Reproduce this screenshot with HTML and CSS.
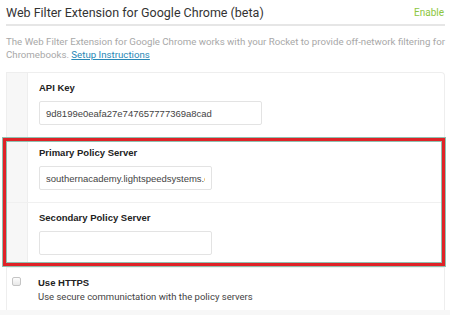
FILE: index.html
```html
<!DOCTYPE html>
<html lang="en">

<head>
    <meta charset="UTF-8">
    <title>Web Filter Extension for Google Chrome</title>
    <link rel="stylesheet" href="styles.css">
</head>

<body>
    <div class="section-head">
        <h2>Web Filter Extension for Google Chrome (beta)</h2>
        <a class="enable" href="#">Enable</a>
    </div>

    <p class="desc">The Web Filter Extension for Google Chrome works with your Rocket to provide off-network filtering for
        Chromebooks. <a href="#">Setup Instructions</a></p>

    <div class="card">
        <div class="row">
            <div class="gutter"></div>
            <div class="field">
                <label>API Key</label>
                <input class="input wide" type="text" value="9d8199e0eafa27e747657777369a8cad">
            </div>
        </div>
        <div class="row">
            <div class="gutter"></div>
            <div class="field">
                <label>Primary Policy Server</label>
                <input class="input" type="text" value="southernacademy.lightspeedsystems.com">
            </div>
        </div>
        <div class="row">
            <div class="gutter"></div>
            <div class="field">
                <label>Secondary Policy Server</label>
                <input class="input" type="text" value="">
            </div>
        </div>
        <div class="row check-row">
            <div class="gutter"><span class="checkbox"></span></div>
            <div class="field">
                <label>Use HTTPS</label>
                <div class="hint">Use secure communictation with the policy servers</div>
            </div>
        </div>

        <!-- highlight box drawn over the policy server rows -->
        <div class="highlight"></div>
    </div>
    <div class="footer-band"></div>
</body>

</html>
```

FILE: styles.css
```css
body {
    margin: 0;
    padding: 0 6px 0 6px;
    width: 439px;
    font-family: Roboto, 'Liberation Sans', sans-serif;
    background: #fff;
    color: #333;
}

.section-head {
    display: flex;
    justify-content: space-between;
    align-items: center;
    height: 24px;
    border-bottom: 2px solid #e6e6e6;
}

.section-head h2 {
    margin: 0;
    font-size: 12.5px;
    font-weight: normal;
    color: #333;
}

.enable {
    color: #8cc63e;
    font-size: 10px;
    text-decoration: none;
    margin-right: 1px;
}

.desc {
    margin: 9px 0 0 0;
    font-size: 9.7px;
    line-height: 13px;
    color: #a8a8a8;
}

.desc a {
    color: #2a88b6;
}

.card {
    position: relative;
    margin-top: 11px;
    border: 1px solid #eee;
    border-bottom: none;
    border-radius: 0 4px 0 0;
    background: #fff;
}

.row {
    display: flex;
    border-bottom: 1px solid #f0f0f0;
}

.gutter {
    width: 20px;
    flex: none;
    background: #f7f7f7;
    border-right: 1px solid #eee;
}

.field {
    padding: 9px 12px 12px 11px;
    flex: 1;
}

.field label {
    display: block;
    font-family: 'Liberation Sans', Arial, sans-serif;
    font-weight: bold;
    font-size: 9.5px;
    line-height: 12px;
    color: #222;
    margin-bottom: 7px;
}

.input {
    display: block;
    box-sizing: border-box;
    width: 173px;
    height: 24px;
    padding: 0 6px;
    border: 1px solid #e3e3e3;
    border-radius: 2px;
    font-family: 'Liberation Sans', Arial, sans-serif;
    font-size: 9.5px;
    color: #444;
}

.input.wide {
    width: 223px;
}

.check-row {
    border-bottom: none;
}

.check-row .gutter {
    background: #fff;
    border-right: none;
}

.check-row .field {
    padding-top: 9px;
    padding-bottom: 7px;
}

.check-row .field label {
    margin-bottom: 2px;
}

.checkbox {
    display: block;
    width: 7px;
    height: 7px;
    margin: 9px 0 0 5px;
    border: 1px solid #c4c4c4;
    border-radius: 2px;
    background: linear-gradient(#fdfdfd, #e8e8e8);
}

.hint {
    font-size: 9.5px;
    line-height: 12px;
    color: #444;
}

.footer-band {
    height: 5px;
    margin: 0 -6px;
    background: #f7f7f7;
}

.highlight {
    position: absolute;
    left: -4px;
    top: 65px;
    width: 436px;
    height: 122px;
    border: 3px solid #df2227;
    box-shadow: 0 0 0 1px #8fc0b0, inset 0 0 0 1px #8fc0b0;
    pointer-events: none;
}
```
